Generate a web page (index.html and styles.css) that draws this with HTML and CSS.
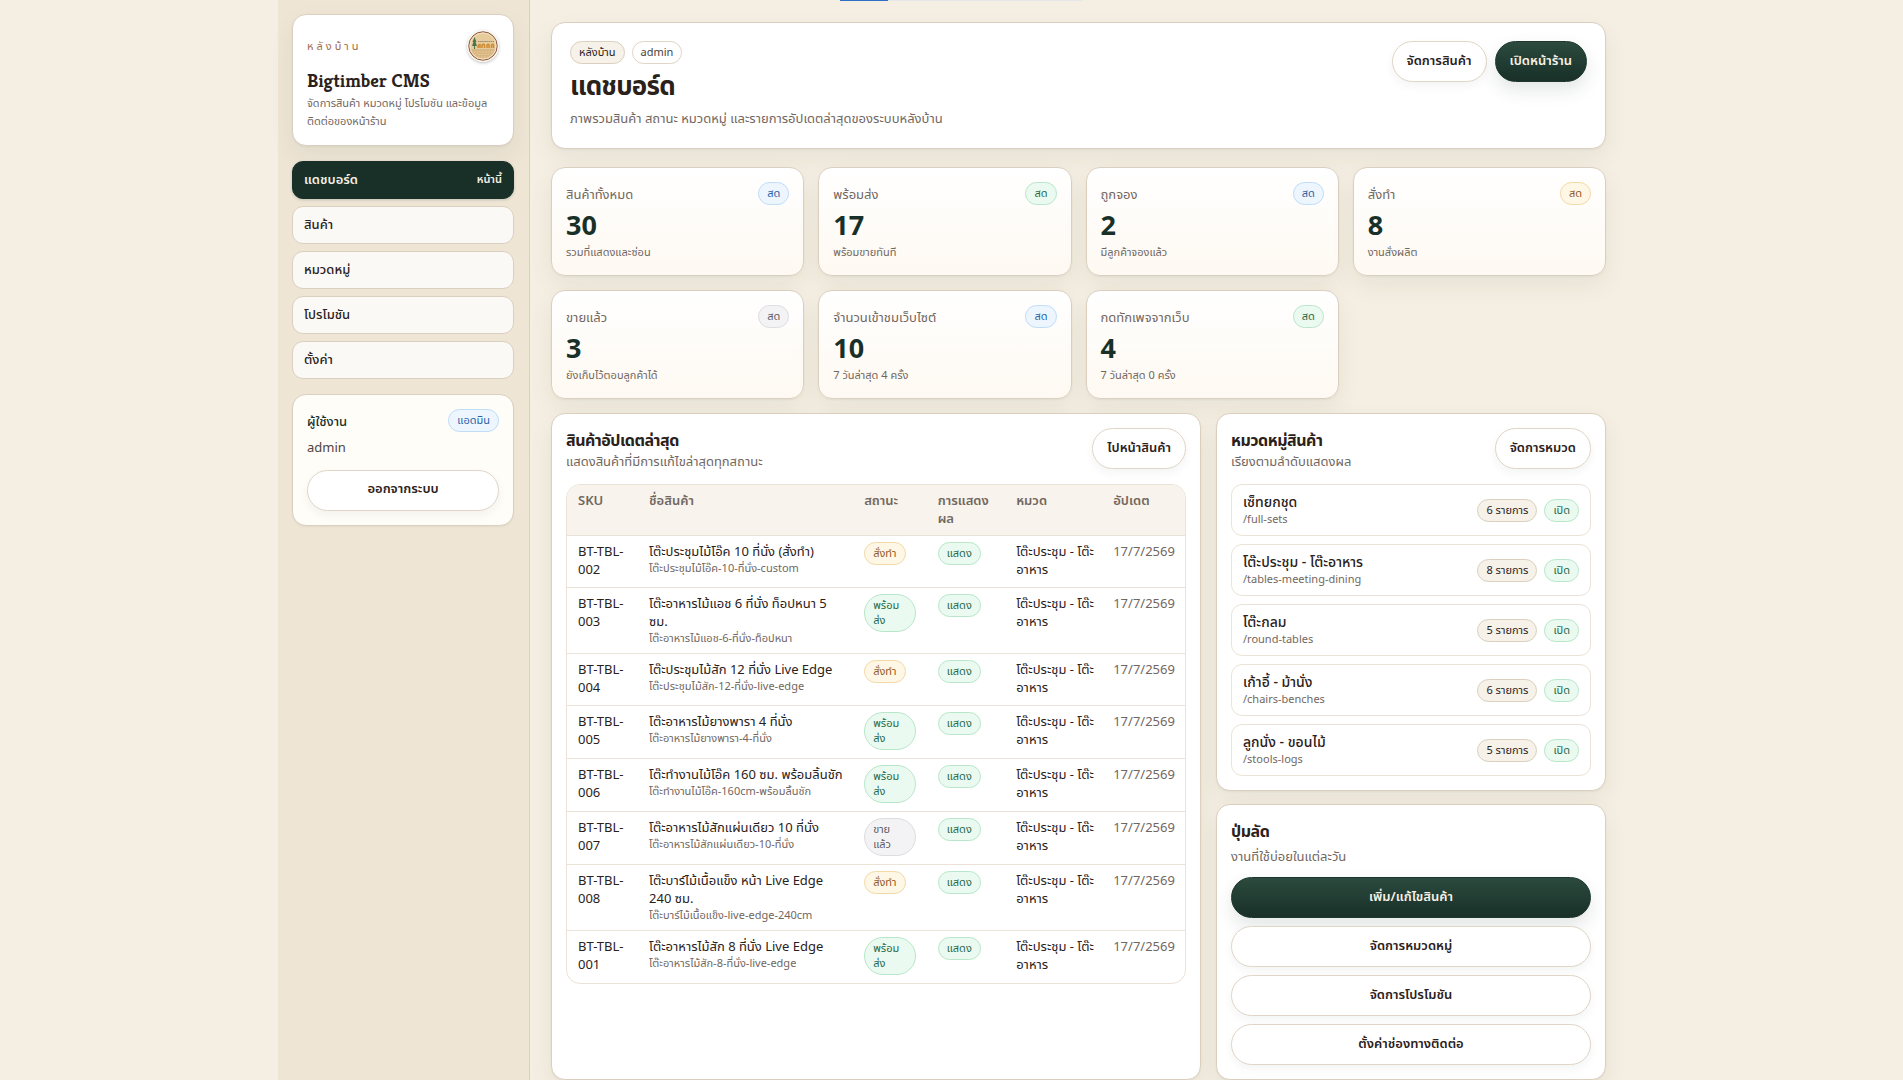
FILE: index.html
```html
<!DOCTYPE html>
<html lang="th">
<head>
    <meta charset="UTF-8">
    <meta name="viewport" content="width=device-width, initial-scale=1.0">
    <title>Bigtimber CMS</title>
    <link rel="stylesheet" href="styles.css">
</head>
<body>
    <div class="load-bar"><span></span></div>
    <div class="shell">
        <!-- Sidebar -->
        <aside class="sidebar">
            <div class="brand card">
                <div class="brand-top">
                    <span class="eyebrow">หลังบ้าน</span>
                    <svg class="logo" viewBox="0 0 32 32" aria-hidden="true">
                        <circle cx="16" cy="16" r="15.5" fill="#f6efe4"/>
                        <circle cx="16" cy="16" r="14.2" fill="#e6cb9b" stroke="#8a5a4a" stroke-width="1"/>
                        <circle cx="16" cy="16" r="13" fill="none" stroke="#f3e2c2" stroke-width="1"/>
                        <path d="M4 19h24a12.4 12.4 0 0 1-24 0z" fill="#d8b684"/>
                        <path d="M6 22h20M8 24.500h16M11 27h10" stroke="#e6c790" stroke-width="1" stroke-dasharray="2 1"/>
                        <path d="M7.500 7l-2 5h1l-1.500 4h2v3h1v-3h2l-1.500-4h1z" fill="#4a7350"/>
                        <path d="M11 11.500h16" stroke="#9b8a6c" stroke-width="1" stroke-dasharray="1.500 .6"/>
                        <path d="M11 18c0-3 1-3.500 2-3.500V18M15 18v-3c1-1 2-1 2.500 0v3M20 18v-3c1-1 2-1 2 0v3M24.500 18v-3c1-1 2-1 2 0v3" fill="none" stroke="#d08a30" stroke-width="1.500"/>
                    </svg>
                </div>
                <div class="brand-name">Bigtimber CMS</div>
                <p class="brand-text">จัดการสินค้า หมวดหมู่ โปรโมชัน และข้อมูลติดต่อของหน้าร้าน</p>
            </div>

            <nav class="menu">
                <a class="active" href="#">แดชบอร์ด <small>หน้านี้</small></a>
                <a href="#">สินค้า</a>
                <a href="#">หมวดหมู่</a>
                <a href="#">โปรโมชัน</a>
                <a href="#">ตั้งค่า</a>
            </nav>

            <div class="user card">
                <div class="row">
                    <span class="user-label">ผู้ใช้งาน</span>
                    <span class="badge blue">แอดมิน</span>
                </div>
                <div class="user-name">admin</div>
                <button type="button" class="btn">ออกจากระบบ</button>
            </div>
        </aside>

        <main class="main">
            <!-- Page header -->
            <header class="page-head card">
                <div>
                    <div class="tags">
                        <span class="badge sand">หลังบ้าน</span>
                        <span class="badge">admin</span>
                    </div>
                    <h1>แดชบอร์ด</h1>
                    <p>ภาพรวมสินค้า สถานะ หมวดหมู่ และรายการอัปเดตล่าสุดของระบบหลังบ้าน</p>
                </div>
                <div class="actions">
                    <a class="btn" href="#">จัดการสินค้า</a>
                    <a class="btn primary" href="#">เปิดหน้าร้าน</a>
                </div>
            </header>

            <!-- Stats -->
            <section class="stats">
                <div class="stat card">
                    <div class="row"><span>สินค้าทั้งหมด</span><span class="badge blue">สด</span></div>
                    <strong>30</strong>
                    <small>รวมที่แสดงและซ่อน</small>
                </div>
                <div class="stat card">
                    <div class="row"><span>พร้อมส่ง</span><span class="badge green">สด</span></div>
                    <strong>17</strong>
                    <small>พร้อมขายทันที</small>
                </div>
                <div class="stat card">
                    <div class="row"><span>ถูกจอง</span><span class="badge blue">สด</span></div>
                    <strong>2</strong>
                    <small>มีลูกค้าจองแล้ว</small>
                </div>
                <div class="stat card">
                    <div class="row"><span>สั่งทำ</span><span class="badge amber">สด</span></div>
                    <strong>8</strong>
                    <small>งานสั่งผลิต</small>
                </div>
                <div class="stat card">
                    <div class="row"><span>ขายแล้ว</span><span class="badge gray">สด</span></div>
                    <strong>3</strong>
                    <small>ยังเก็บไว้ตอบลูกค้าได้</small>
                </div>
                <div class="stat card">
                    <div class="row"><span>จำนวนเข้าชมเว็บไซต์</span><span class="badge blue">สด</span></div>
                    <strong>10</strong>
                    <small>7 วันล่าสุด 4 ครั้ง</small>
                </div>
                <div class="stat card">
                    <div class="row"><span>กดทักเพจจากเว็บ</span><span class="badge green">สด</span></div>
                    <strong>4</strong>
                    <small>7 วันล่าสุด 0 ครั้ง</small>
                </div>
            </section>

            <section class="panels">
                <!-- Latest products -->
                <div class="panel card">
                    <div class="panel-head">
                        <div>
                            <h2>สินค้าอัปเดตล่าสุด</h2>
                            <p>แสดงสินค้าที่มีการแก้ไขล่าสุดทุกสถานะ</p>
                        </div>
                        <a class="btn" href="#">ไปหน้าสินค้า</a>
                    </div>
                    <div class="table-wrap">
                        <table>
                            <colgroup>
                                <col class="c-sku"><col class="c-name"><col class="c-status"><col class="c-show"><col class="c-cat"><col class="c-date">
                            </colgroup>
                            <thead>
                                <tr>
                                    <th>SKU</th>
                                    <th>ชื่อสินค้า</th>
                                    <th>สถานะ</th>
                                    <th>การแสดงผล</th>
                                    <th>หมวด</th>
                                    <th>อัปเดต</th>
                                </tr>
                            </thead>
                            <tbody>
                                <tr>
                                    <td>BT-TBL-002</td>
                                    <td class="name">โต๊ะประชุมไม้โอ๊ค 10 ที่นั่ง (สั่งทำ)<small>โต๊ะประชุมไม้โอ๊ค-10-ที่นั่ง-custom</small></td>
                                    <td><span class="badge amber">สั่งทำ</span></td>
                                    <td><span class="badge green">แสดง</span></td>
                                    <td>โต๊ะประชุม - โต๊ะอาหาร</td>
                                    <td class="date">17/7/2569</td>
                                </tr>
                                <tr>
                                    <td>BT-TBL-003</td>
                                    <td class="name">โต๊ะอาหารไม้แอช 6 ที่นั่ง ท็อปหนา 5 ซม.<small>โต๊ะอาหารไม้แอช-6-ที่นั่ง-ท็อปหนา</small></td>
                                    <td><span class="badge green">พร้อมส่ง</span></td>
                                    <td><span class="badge green">แสดง</span></td>
                                    <td>โต๊ะประชุม - โต๊ะอาหาร</td>
                                    <td class="date">17/7/2569</td>
                                </tr>
                                <tr>
                                    <td>BT-TBL-004</td>
                                    <td class="name">โต๊ะประชุมไม้สัก 12 ที่นั่ง Live Edge<small>โต๊ะประชุมไม้สัก-12-ที่นั่ง-live-edge</small></td>
                                    <td><span class="badge amber">สั่งทำ</span></td>
                                    <td><span class="badge green">แสดง</span></td>
                                    <td>โต๊ะประชุม - โต๊ะอาหาร</td>
                                    <td class="date">17/7/2569</td>
                                </tr>
                                <tr>
                                    <td>BT-TBL-005</td>
                                    <td class="name">โต๊ะอาหารไม้ยางพารา 4 ที่นั่ง<small>โต๊ะอาหารไม้ยางพารา-4-ที่นั่ง</small></td>
                                    <td><span class="badge green">พร้อมส่ง</span></td>
                                    <td><span class="badge green">แสดง</span></td>
                                    <td>โต๊ะประชุม - โต๊ะอาหาร</td>
                                    <td class="date">17/7/2569</td>
                                </tr>
                                <tr>
                                    <td>BT-TBL-006</td>
                                    <td class="name">โต๊ะทำงานไม้โอ๊ค 160 ซม. พร้อมลิ้นชัก<small>โต๊ะทำงานไม้โอ๊ค-160cm-พร้อมลิ้นชัก</small></td>
                                    <td><span class="badge green">พร้อมส่ง</span></td>
                                    <td><span class="badge green">แสดง</span></td>
                                    <td>โต๊ะประชุม - โต๊ะอาหาร</td>
                                    <td class="date">17/7/2569</td>
                                </tr>
                                <tr>
                                    <td>BT-TBL-007</td>
                                    <td class="name">โต๊ะอาหารไม้สักแผ่นเดียว 10 ที่นั่ง<small>โต๊ะอาหารไม้สักแผ่นเดียว-10-ที่นั่ง</small></td>
                                    <td><span class="badge gray">ขายแล้ว</span></td>
                                    <td><span class="badge green">แสดง</span></td>
                                    <td>โต๊ะประชุม - โต๊ะอาหาร</td>
                                    <td class="date">17/7/2569</td>
                                </tr>
                                <tr>
                                    <td>BT-TBL-008</td>
                                    <td class="name">โต๊ะบาร์ไม้เนื้อแข็ง หน้า Live Edge 240 ซม.<small>โต๊ะบาร์ไม้เนื้อแข็ง-live-edge-240cm</small></td>
                                    <td><span class="badge amber">สั่งทำ</span></td>
                                    <td><span class="badge green">แสดง</span></td>
                                    <td>โต๊ะประชุม - โต๊ะอาหาร</td>
                                    <td class="date">17/7/2569</td>
                                </tr>
                                <tr>
                                    <td>BT-TBL-001</td>
                                    <td class="name">โต๊ะอาหารไม้สัก 8 ที่นั่ง Live Edge<small>โต๊ะอาหารไม้สัก-8-ที่นั่ง-live-edge</small></td>
                                    <td><span class="badge green">พร้อมส่ง</span></td>
                                    <td><span class="badge green">แสดง</span></td>
                                    <td>โต๊ะประชุม - โต๊ะอาหาร</td>
                                    <td class="date">17/7/2569</td>
                                </tr>
                            </tbody>
                        </table>
                    </div>
                </div>

                <div class="side">
                    <!-- Categories -->
                    <div class="panel card">
                        <div class="panel-head">
                            <div>
                                <h2>หมวดหมู่สินค้า</h2>
                                <p>เรียงตามลำดับแสดงผล</p>
                            </div>
                            <a class="btn" href="#">จัดการหมวด</a>
                        </div>
                        <div class="categories">
                            <div class="category">
                                <div>เซ็ทยกชุด<small>/full-sets</small></div>
                                <div class="tags"><span class="badge sand">6 รายการ</span><span class="badge green">เปิด</span></div>
                            </div>
                            <div class="category">
                                <div>โต๊ะประชุม - โต๊ะอาหาร<small>/tables-meeting-dining</small></div>
                                <div class="tags"><span class="badge sand">8 รายการ</span><span class="badge green">เปิด</span></div>
                            </div>
                            <div class="category">
                                <div>โต๊ะกลม<small>/round-tables</small></div>
                                <div class="tags"><span class="badge sand">5 รายการ</span><span class="badge green">เปิด</span></div>
                            </div>
                            <div class="category">
                                <div>เก้าอี้ - ม้านั่ง<small>/chairs-benches</small></div>
                                <div class="tags"><span class="badge sand">6 รายการ</span><span class="badge green">เปิด</span></div>
                            </div>
                            <div class="category">
                                <div>ลูกนั่ง - ขอนไม้<small>/stools-logs</small></div>
                                <div class="tags"><span class="badge sand">5 รายการ</span><span class="badge green">เปิด</span></div>
                            </div>
                        </div>
                    </div>

                    <!-- Shortcuts -->
                    <div class="panel card shortcuts">
                        <h2>ปุ่มลัด</h2>
                        <p>งานที่ใช้บ่อยในแต่ละวัน</p>
                        <div class="links">
                            <a class="btn primary" href="#">เพิ่ม/แก้ไขสินค้า</a>
                            <a class="btn" href="#">จัดการหมวดหมู่</a>
                            <a class="btn" href="#">จัดการโปรโมชัน</a>
                            <a class="btn" href="#">ตั้งค่าช่องทางติดต่อ</a>
                        </div>
                    </div>
                </div>
            </section>
        </main>
    </div>
</body>
</html>
```
FILE: styles.css
```css
* {
    box-sizing: border-box;
}

body {
    margin: 0;
    background: #f5eee2;
    color: #2b211b;
    font-family: "Noto Sans", "Noto Sans Thai", sans-serif;
    font-size: 13px;
    line-height: 18px;
}

h1, h2, p {
    margin: 0;
}

h1, h2 {
    letter-spacing: -0.03em;
}

a {
    color: inherit;
    text-decoration: none;
}

small {
    font-size: 11px;
}

/* Loading strip at the top of the window */
.load-bar {
    position: fixed;
    top: 0;
    left: 840px;
    width: 242px;
    height: 1px;
    background: #e5e7eb;
}

.load-bar span {
    display: block;
    width: 20%;
    height: 100%;
    background: #2f6fc4;
}

.shell {
    display: grid;
    grid-template-columns: 252px 1fr;
    max-width: 1347px;
    min-height: 100vh;
    margin: 0 auto;
}

.card {
    border: 1px solid #dbd0c0;
    border-radius: 14px;
    background: #fff;
    box-shadow: 0 10px 26px rgba(24, 48, 40, 0.06), 0 1px 2px rgba(24, 48, 40, 0.05);
}

.row {
    display: flex;
    justify-content: space-between;
    align-items: center;
}

/* Sidebar */
.sidebar {
    display: flex;
    flex-direction: column;
    gap: 15px;
    padding: 14px 15px 14px 14px;
    background: #eee5d5;
    border-right: 1px solid #dbd0c0;
}

.brand {
    padding: 15px 14px;
}

.brand-top {
    display: flex;
    justify-content: space-between;
    align-items: center;
}

.eyebrow {
    color: #a26b48;
    font-size: 11px;
    letter-spacing: 3px;
}

.logo {
    width: 32px;
    height: 32px;
    border-radius: 50%;
    box-shadow: 0 1px 3px rgba(0, 0, 0, 0.25);
}

.brand-name {
    margin-top: 6px;
    font-family: Kreon, "Roboto Slab", "Noto Serif", "DejaVu Serif", serif;
    font-size: 19px;
    font-weight: 700;
    line-height: 24px;
}

.brand-text {
    margin-top: 2px;
    color: #72675f;
    font-size: 11px;
}

.menu {
    display: flex;
    flex-direction: column;
    gap: 7px;
}

.menu a {
    display: flex;
    justify-content: space-between;
    align-items: center;
    height: 38px;
    padding: 0 11px 2px;
    border: 1px solid #dbd0c0;
    border-radius: 11px;
    background: #fbf9f6;
    font-weight: 500;
}

.menu .active {
    border-color: #183028;
    background: #183028;
    color: #f5eee2;
    font-weight: 600;
    box-shadow: 0 1px 3px rgba(24, 48, 40, 0.2);
}

.user {
    padding: 14px;
    background: #fffdf8;
    box-shadow: 0 1px 2px rgba(24, 48, 40, 0.06);
}

.user-label {
    color: #183028;
    font-weight: 500;
}

.user-name {
    margin: 6px 0 14px;
    color: #4f443c;
}

.user .btn {
    width: 100%;
}

/* Buttons and badges */
.btn {
    display: inline-flex;
    align-items: center;
    justify-content: center;
    height: 41px;
    padding: 0 14px 4px;
    border: 1px solid #e0d5c6;
    border-radius: 21px;
    background: #fff;
    color: #2b211b;
    font-family: inherit;
    font-size: 13px;
    font-weight: 600;
    white-space: nowrap;
    cursor: pointer;
    box-shadow: 0 4px 10px rgba(24, 48, 40, 0.05);
}

.btn.primary {
    border-color: #1d372e;
    background: linear-gradient(#2c4a3e, #183028);
    color: #f8f1e5;
    box-shadow: 0 8px 18px rgba(24, 48, 40, 0.12);
}

.badge {
    display: inline-block;
    padding: 2px 8px 4px;
    border: 1px solid #e0d5c6;
    border-radius: 19px;
    background: #fff;
    color: #4a3f38;
    font-size: 11px;
    font-weight: 400;
    line-height: 15px;
    vertical-align: top;
}

.badge.sand {
    border-color: #dbcfbe;
    background: #f6f1e9;
    color: #2b211b;
}

.badge.blue {
    border-color: #bfdcf8;
    background: #edf6ff;
    color: #2b63a5;
}

.badge.green {
    border-color: #b9e6ca;
    background: #ebfaf0;
    color: #27694a;
}

.badge.amber {
    border-color: #f2d9a6;
    background: #fff7e6;
    color: #95591c;
}

.badge.gray {
    border-color: #dddce0;
    background: #f3f3f5;
    color: #5f5b62;
}

.tags {
    display: flex;
    gap: 7px;
}

/* Main column */
.main {
    min-width: 0;
    padding: 22px 19px 0 21px;
}

.page-head {
    display: flex;
    justify-content: space-between;
    align-items: flex-start;
    padding: 18px;
}

.page-head h1 {
    margin: 4px 0 6px;
    font-size: 26px;
    line-height: 34px;
}

.page-head p {
    margin-bottom: 2px;
    color: #72675f;
    line-height: 20px;
}

.actions {
    display: flex;
    gap: 8px;
}

.stats {
    display: grid;
    grid-template-columns: repeat(4, 1fr);
    gap: 14px;
    margin-top: 18px;
}

.stat {
    padding: 14px;
    background: linear-gradient(#fff, #fef9f2);
    color: #72675f;
}

.stat strong {
    display: block;
    margin: 5px 0 3px;
    color: #183028;
    font-size: 27px;
    line-height: 30px;
}

.stat small {
    display: block;
}

/* Panels */
.panels {
    display: grid;
    grid-template-columns: 5fr 3fr;
    gap: 15px;
    margin-top: 14px;
}

.side {
    display: flex;
    flex-direction: column;
    gap: 13px;
}

.panel {
    min-width: 0;
    padding: 14px;
}

.panel-head {
    display: flex;
    justify-content: space-between;
    align-items: flex-start;
    margin-bottom: 14px;
}

.panel h2 {
    font-size: 16px;
    line-height: 24px;
}

.panel p {
    color: #72675f;
}

.table-wrap {
    overflow: hidden;
    border: 1px solid #ece3d8;
    border-radius: 14px;
}

table {
    width: 100%;
    table-layout: fixed;
    border-collapse: collapse;
}

.c-sku {
    width: 11.5%;
}

.c-name {
    width: 34.8%;
}

.c-status {
    width: 11.9%;
}

.c-show {
    width: 12.7%;
}

.c-cat {
    width: 15.7%;
}

.c-date {
    width: 13.4%;
}

th, td {
    height: 52px;
    border-bottom: 1px solid #ece3d8;
    text-align: left;
    vertical-align: top;
}

th {
    height: 50px;
    padding: 6px 11px 8px;
    background: #f8f3ec;
    color: #72675f;
    font-weight: 600;
}

td {
    padding: 6px 4px 8px 11px;
}

td.name {
    padding-right: 9px;
}

td .badge {
    max-width: 52px;
}

tr:last-child td {
    border-bottom: 0;
}

td small {
    display: block;
    color: #72675f;
    line-height: 15px;
}

.date {
    color: #72675f;
}

.categories {
    display: flex;
    flex-direction: column;
    gap: 8px;
}

.category {
    display: flex;
    justify-content: space-between;
    align-items: center;
    height: 52px;
    padding: 0 11px;
    border: 1px solid #ece3d8;
    border-radius: 11px;
    font-size: 14px;
    font-weight: 500;
}

.category small {
    display: block;
    color: #72675f;
    font-weight: 400;
    line-height: 16px;
}

.shortcuts p {
    margin: 4px 0 12px;
}

.links {
    display: flex;
    flex-direction: column;
    gap: 8px;
}
```
